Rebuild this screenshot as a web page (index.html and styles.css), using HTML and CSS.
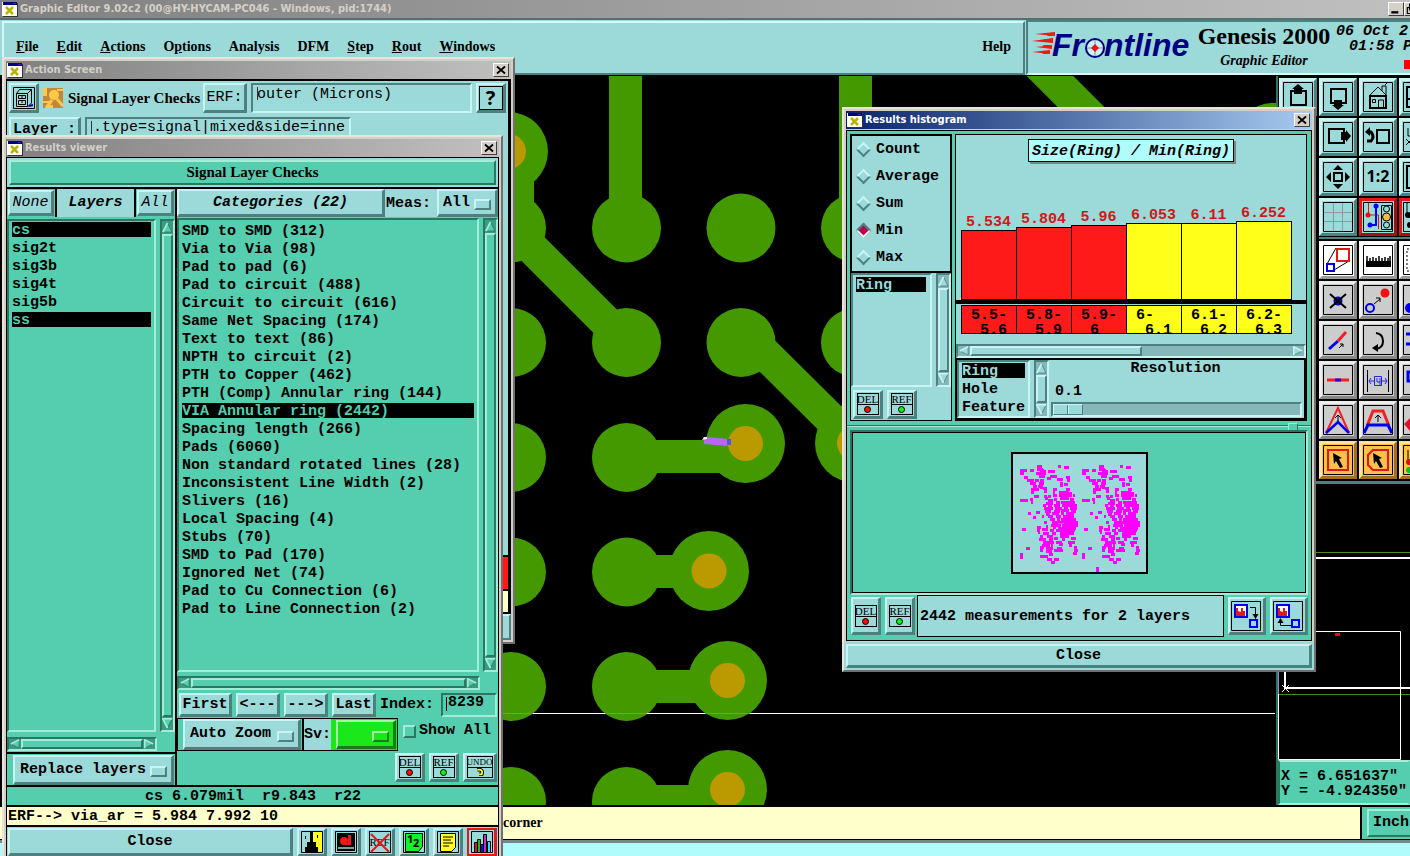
FILE: index.html
```html
<!DOCTYPE html>
<html lang="en">
<head>
<meta charset="utf-8">
<title>Graphic Editor</title>
<link rel="stylesheet" href="styles.css">
</head>
<body>
<svg class="defs" aria-hidden="true">
  <symbol id="app" viewBox="0 0 16 15"><path fill="#333" d="M1 1h15v14H1z"/><path fill="#fff" d="M0 0h15v14H0z"/><path fill="#000080" d="M1 0h14v3H1z"/><path fill="#80a" d="M11 1h3v1h-3z"/><path stroke="#b8b400" stroke-width="2.5" d="M4 5l7 7M11 5l-7 7"/></symbol>
  <symbol id="x" viewBox="0 0 10 10"><path stroke="#000" stroke-width="1.8" d="M1 1.500l8 7M9 1.500l-8 7"/></symbol>
  <symbol id="up" viewBox="0 0 12 12"><path class="tri-d" d="M6 1l5 10H1z"/><path class="tri-l" d="M1 11L6 1"/></symbol>
  <symbol id="down" viewBox="0 0 12 12"><path class="tri-d" d="M1 1h10L6 11z"/><path class="tri-l" d="M6 11L1 1h10"/></symbol>
  <symbol id="left" viewBox="0 0 12 12"><path class="tri-d" d="M1 6l10-5v10z"/><path class="tri-l" d="M11 1L1 6"/></symbol>
  <symbol id="right" viewBox="0 0 12 12"><path class="tri-d" d="M11 6L1 1v10z"/><path class="tri-l" d="M11 6L1 1v10"/></symbol>
</svg>

<main class="editor">
  <header class="title main-title">
    <svg class="app"><use href="#app"/></svg><span>Graphic Editor 9.02c2 (00@HY-HYCAM-PC046 - Windows, pid:1744)</span>
    <div class="caption"><button aria-label="Minimize"><svg viewBox="0 0 12 10"><path d="M2 7h6v2H2z"/></svg></button><button aria-label="Restore"><svg viewBox="0 0 12 10"><path class="ln" d="M4 1h6v5H4zM2 4h5v5H2z"/></svg></button></div>
  </header>

  <div class="top">
    <nav class="menubar">
      <button><u>F</u>ile</button><button><u>E</u>dit</button><button><u>A</u>ctions</button><button>O<u>p</u>tions</button><button>Analysis</button><button>DFM</button><button><u>S</u>tep</button><button><u>R</u>out</button><button><u>W</u>indows</button><button class="help">Help</button>
    </nav>
    <div class="brand">
      <svg class="logo" viewBox="0 0 162 36" aria-label="Frontline">
        <path fill="#f01818" d="M3 5l20-2v4zM0 12l21-3v5zM4 18l16-2v4zM0 23l18-2v4z"/><path fill="#f01818" d="M12 4h10l-1 3h-5zM12 10h8l-1 3h-5zM11 16h7l-1 3h-5zM9 22h8l-1 3h-5z"/>
        <g class="logo-text"><text x="20" y="27">Fr</text><text x="72" y="27">ntline</text></g>
        <circle cx="63" cy="19" r="9" fill="#c8f4f4" stroke="#000080" stroke-width="2"/><path stroke="#88a" d="M63 11v16M55 19h16"/><path fill="#f01010" d="M63 15l4 4-4 4-4-4z"/>
      </svg>
      <div class="product"><b>Genesis 2000</b><i>Graphic Editor</i></div>
      <div class="clock"><span>06 Oct 2</span><span>01:58 P</span><em></em></div>
    </div>
  </div>

  <div class="work">
    <svg class="board" aria-label="PCB artwork"><g transform="translate(0 -76)">
      <g stroke="#449900" stroke-width="33" fill="none" stroke-linecap="round">
        <path d="M625.500 60v168M855.500 60v168M517.500 152v76M512 228l114 114M751 340l104 103M1029 55l90 90M626 456.500h119M626 571.500h83M626 686.500h101M626 801.500h101"/>
      </g>
      <g fill="#449900">
        <circle cx="511.500" cy="228" r="34.500"/><circle cx="626.500" cy="228" r="34.500"/><circle cx="741" cy="228" r="34.500"/><circle cx="855.500" cy="228" r="34.500"/>
        <circle cx="511.500" cy="342.500" r="34.500"/><circle cx="626.500" cy="342.500" r="34.500"/><circle cx="741" cy="342.500" r="34.500"/><circle cx="855.500" cy="342.500" r="34.500"/>
        <circle cx="511.500" cy="457.500" r="34.500"/><circle cx="626.500" cy="457.500" r="34.500"/>
        <circle cx="511.500" cy="572" r="34.500"/><circle cx="626.500" cy="572" r="34.500"/>
        <circle cx="511.500" cy="686.500" r="34.500"/><circle cx="626.500" cy="686.500" r="34.500"/>
        <circle cx="511.500" cy="801.500" r="34.500"/><circle cx="626.500" cy="801.500" r="34.500"/>
        <circle cx="508.500" cy="151.500" r="39.500"/><circle cx="745.500" cy="443.500" r="39.500"/><circle cx="854.500" cy="443" r="39.500"/><circle cx="709" cy="571" r="40"/><circle cx="727.500" cy="680.500" r="39.500"/><circle cx="727.500" cy="789.500" r="39.500"/><circle cx="1273" cy="142" r="39"/>
      </g>
      <g fill="#bb9900"><circle cx="508.500" cy="151.500" r="17.500"/><circle cx="745.500" cy="443.500" r="17.500"/><circle cx="854.500" cy="443" r="17.500"/><circle cx="709" cy="571" r="17.500"/><circle cx="727.500" cy="680.500" r="17.500"/><circle cx="727.500" cy="789.500" r="17.500"/></g>
      <path stroke="#fff" d="M503 713.500h772"/><path stroke="#888" d="M503 713.500h30M605 713.500h42M705 713.500h45"/>
      <path stroke="#b864ff" stroke-width="7" d="M704 440.500l25 2"/><path fill="#5058d8" d="M727 439h4v6h-4z"/><path fill="#fff" d="M702 440l2-3h3v2z"/>
    </g></svg>

    <aside class="side">
      <div class="tools">
        <div class="tool-col"><button class="tool" aria-label="Pan up"><svg viewBox="0 0 32 32"><path class="ln" d="M1.500 1.500h29v29h-29z"/><path class="l2" d="M12 10H9v14h15V10h-4"/><path d="M16 3l6 5h-2v5h-8V8h-2z"/></svg></button></div>
        <div class="tool-groups">
          <div class="grid3">
            <button class="tool" aria-label="Pan down"><svg viewBox="0 0 32 32"><path class="ln" d="M1.500 1.500h29v29h-29z"/><path class="l2" d="M12 22H9V8h15v14h-4"/><path d="M16 29l6-5h-2v-5h-8v5h-2z"/></svg></button>
            <button class="tool" aria-label="Home"><svg viewBox="0 0 32 32"><path class="ln" d="M1.500 1.500h29v29h-29zM7 15L16 6l9 9M20 10V5h4v9M23 4l2-2"/><path class="l2" d="M8 15h16v12H8z"/><path class="ln" d="M16.500 27v-8h5v8M10.500 18.500h3v3h-3z"/></svg></button>
            <button class="tool" aria-label="Zoom in"><svg viewBox="0 0 32 32"><path class="ln" d="M1.500 1.500h29v29h-29z"/><path class="l2" d="M5 6h22v20H5zM5 18h12"/></svg></button>
            <button class="tool" aria-label="Pan right"><svg viewBox="0 0 32 32"><path class="ln" d="M1.500 1.500h29v29h-29z"/><path class="l2" d="M22 12V8H7v14h15v-4"/><path d="M29 15l-5-6v2h-5v8h5v2z"/></svg></button>
            <button class="tool" aria-label="Previous view"><svg viewBox="0 0 32 32"><path class="ln" d="M1.500 1.500h29v29h-29z"/><path class="l2" d="M15 9h12v13H15z"/><path fill="none" stroke="#000" stroke-width="3" d="M6 11h3q4 5 0 9H5"/><path d="M3 11l5-5v9z"/></svg></button>
            <button class="tool" aria-label="Reset view"><svg viewBox="0 0 32 32"><path class="ln" d="M1.500 1.500h29v29h-29zM6 7v8h6M4 18l6 6M4 24l6-6"/></svg></button>
            <button class="tool" aria-label="Fit"><svg viewBox="0 0 32 32"><path class="ln" d="M1.500 1.500h29v29h-29z"/><path class="l2" d="M12 12h8v8h-8z"/><path d="M16 4l5 5H11zM16 28l5-5H11zM4 16l5-5v10zM28 16l-5-5v10z"/></svg></button>
            <button class="tool" aria-label="Scale 1:2"><svg viewBox="0 0 32 32"><path class="ln" d="M1.500 1.500h29v29h-29z"/><text class="scale" x="16" y="21">1:2</text></svg></button>
            <button class="tool" aria-label="Window"><svg viewBox="0 0 32 32"><path class="ln" d="M1.500 1.500h29v29h-29z"/><path class="l2" d="M5 5h22v22H5z"/></svg></button>
            <button class="tool" aria-label="Grid"><svg viewBox="0 0 32 32"><path class="ln" d="M1.500 1.500h29v29h-29z"/><path fill="none" stroke="#8a9aa0" d="M11.500 2v28M20.500 2v28M2 11.500h28M2 20.500h28"/></svg></button>
            <button class="tool hot" aria-label="Display control"><svg viewBox="0 0 32 32"><path class="ln" d="M1.500 1.500h29v29h-29zM19.500 4.500h10v24h-10z"/><path fill="none" stroke="#e01010" d="M6.500 2v12h10v14"/><path fill="none" stroke="#00e" stroke-width="2" d="M14 5v19H8"/><circle cx="6" cy="14" r="2.500" fill="#e01010"/><circle cx="14" cy="5" r="2.500" fill="#00e"/><circle cx="8" cy="24" r="2.500" fill="#00e"/><circle class="ln" cx="24.500" cy="8" r="3"/><circle cx="24.500" cy="16" r="4" fill="#fb4" stroke="#000"/><circle class="ln" cx="24.500" cy="24" r="3"/></svg></button>
            <button class="tool hot" aria-label="Nets"><svg viewBox="0 0 32 32"><path class="ln" d="M1.500 1.500h29v29h-29zM5 2v12M5 14h8v10H6"/><circle cx="6" cy="14" r="3"/><circle cx="8" cy="24" r="3"/></svg></button>
          </div>
          <div class="grid3 edit-tools">
            <button class="tool white" aria-label="Zoom window"><svg viewBox="0 0 32 32"><path class="ln" d="M1.500 1.500h29v29h-29zM5 20L14 4M12 26l15-9"/><path fill="none" stroke="#e01818" stroke-width="2" d="M15 5h12v12H15z"/><path fill="#fff" stroke="#00e" stroke-width="2" d="M5 20h7v7H5z"/></svg></button>
            <button class="tool white" aria-label="Measure"><svg viewBox="0 0 32 32"><path class="ln" d="M1.500 1.500h29v29h-29z"/><path d="M4 17h25v6H4z"/><path stroke="#000" stroke-width="1.500" d="M5 17v-5M8 17v-3M11 17v-4M14 17v-3M17 17v-5M20 17v-3M23 17v-4M26 17v-3M28 17v-5"/></svg></button>
            <button class="tool white" aria-label="Select area"><svg viewBox="0 0 32 32"><path class="ln" d="M1.500 1.500h29v29h-29z"/><path class="ln" stroke-dasharray="2" d="M5 5h22v22H5z"/></svg></button>
            <button class="tool grey" aria-label="Delete"><svg viewBox="0 0 32 32"><path class="ln" d="M1.500 1.500h29v29h-29z"/><circle cx="16" cy="17" r="4.500" fill="#00b"/><path class="l2" d="M8 10l16 14M24 10L8 24"/></svg></button>
            <button class="tool grey" aria-label="Move"><svg viewBox="0 0 32 32"><path class="ln" d="M1.500 1.500h29v29h-29z"/><circle cx="23" cy="9" r="4.500" fill="#f01010"/><circle cx="8" cy="24" r="4" fill="none" stroke="#00e" stroke-width="2"/><path class="ln" d="M12 20l6-5M18 18v-4h-4"/></svg></button>
            <button class="tool grey" aria-label="Copy"><svg viewBox="0 0 32 32"><path class="ln" d="M1.500 1.500h29v29h-29z"/><circle cx="8" cy="24" r="5" fill="#00e"/></svg></button>
            <button class="tool grey" aria-label="Stretch"><svg viewBox="0 0 32 32"><path class="ln" d="M1.500 1.500h29v29h-29z"/><path stroke="#00e" stroke-width="3" d="M7 25l9-8"/><path stroke="#f02020" stroke-width="3" d="M16 17l8-9"/><path class="ln" d="M17 24l4-4M21 23v-3h-3"/></svg></button>
            <button class="tool grey" aria-label="Rotate"><svg viewBox="0 0 32 32"><path class="ln" d="M1.500 1.500h29v29h-29z"/><path class="l2" d="M14 9q7 1 7 8t-7 8"/><path d="M10 24l6-4v8z"/></svg></button>
            <button class="tool grey" aria-label="Align"><svg viewBox="0 0 32 32"><path class="ln" d="M1.500 1.500h29v29h-29z"/><path stroke="#00e" stroke-width="3" d="M4 10h14M4 20h14"/></svg></button>
            <button class="tool grey" aria-label="Split line"><svg viewBox="0 0 32 32"><path class="ln" d="M1.500 1.500h29v29h-29z"/><path stroke="#f02020" stroke-width="3" d="M5 16h22"/><path stroke="#30c" stroke-width="3" d="M13 16h6"/></svg></button>
            <button class="tool grey" aria-label="Spacing"><svg viewBox="0 0 32 32"><path class="ln" d="M1.500 1.500h29v29h-29zM5.500 6v22M26.500 6v22"/><path fill="none" stroke="#22e" d="M7 17h5M20 17h5M9 14l-2 3 2 3M23 14l2 3-2 3M12.500 12.500h7v9h-7zM15 14v4h3v-4M18 18v3"/></svg></button>
            <button class="tool grey" aria-label="Resize"><svg viewBox="0 0 32 32"><path class="ln" d="M1.500 1.500h29v29h-29z"/><path fill="none" stroke="#00e" stroke-width="3" d="M6 8h16v9H6zM10 17v7"/></svg></button>
            <button class="tool grey" aria-label="Move corner"><svg viewBox="0 0 32 32"><path class="ln" d="M1.500 1.500h29v29h-29z"/><path fill="none" stroke="#f02020" stroke-width="2" d="M4 29l12-25 11 25"/><path fill="none" stroke="#00e" stroke-width="2.500" d="M4 29l12-11 11 11"/><path class="ln" d="M16 17v-5M13 14l3-3 3 3"/></svg></button>
            <button class="tool grey" aria-label="Move edge"><svg viewBox="0 0 32 32"><path class="ln" d="M1.500 1.500h29v29h-29z"/><path fill="none" stroke="#f02020" stroke-width="3" d="M5 22l6-15h10l6 15"/><path fill="none" stroke="#00e" stroke-width="3" d="M2 29l4-8h20l4 8"/><path class="ln" d="M16 18v-6M13 14l3-3 3 3"/></svg></button>
            <button class="tool grey" aria-label="Add"><svg viewBox="0 0 32 32"><path class="ln" d="M1.500 1.500h29v29h-29z"/><path fill="#e01030" d="M2 20l6-6v5h5v3H8v5z"/></svg></button>
            <button class="tool gold" aria-label="Select"><svg viewBox="0 0 32 32"><path class="ln" d="M1.500 1.500h29v29h-29z"/><path fill="none" stroke="#e01818" stroke-width="2" d="M6 6h20v20H6z"/><path d="M11 9l9 5-3 1 4 8-3 1-4-7-2 3z"/></svg></button>
            <button class="tool gold" aria-label="Select polygon"><svg viewBox="0 0 32 32"><path class="ln" d="M1.500 1.500h29v29h-29z"/><path fill="none" stroke="#e01818" stroke-width="2" d="M11 6h15v20H11l-5-5V11z"/><path d="M11 9l9 5-3 1 4 8-3 1-4-7-2 3z"/></svg></button>
            <button class="tool gold" aria-label="Select net"><svg viewBox="0 0 32 32"><path class="ln" d="M1.500 1.500h29v29h-29zM6 6v14"/><circle cx="7" cy="18" r="3" fill="#e01010"/><circle cx="7" cy="26" r="3" fill="#10c020"/></svg></button>
          </div>
        </div>
      </div>
      <svg class="overview" aria-label="Overview">
        <g transform="translate(-1278 -484)" fill="none"><path stroke="#4a8a20" d="M1278 552.500h140M1278 694.500h140"/><path stroke="#fff" stroke-width="2" d="M1420 558h-135v130h135"/><path stroke="#fff" d="M1278.500 631.500h122v128h-122zM1282 685l7 7M1289 685l-7 7"/><path stroke="#a080e0" d="M1278.500 640v54"/><path fill="#e01010" d="M1335 633h5v3h-5z"/></g>
      </svg>
      <div class="coords"><div>X = 6.651637"</div><div>Y = -4.924350"</div></div>
    </aside>
  </div>

  <div class="status"><div class="message">corner</div><div class="units"><button>Inch</button></div></div>
  <div class="footer"></div>
</main>

<section class="win action" aria-label="Action Screen">
  <header class="title"><svg class="app"><use href="#app"/></svg><span>Action Screen</span><button class="close" aria-label="Close window"><svg><use href="#x"/></svg></button></header>
  <div class="action-body">
    <div class="action-top">
      <button class="bev sq" aria-label="Open checklist"><svg viewBox="0 0 24 24"><path class="ln" d="M1.500 1.500h21v21h-21zM4.500 7.500h11v13h-11zM4.500 7.500l3-4h12l-4 4M19.500 4v13l-4 4M6.500 9.500h7v3h-7zM6.500 14.500h7v4h-7zM9 11h2M9 16h2"/><path stroke="#00c" stroke-width="2" d="M17 20l4-1"/></svg></button>
      <svg class="badge" viewBox="0 0 20 20"><path fill="#c08838" d="M0 0h20v20H0z"/><path fill="#ffc848" d="M0 0h4v8H0zM0 13h8v2H0zM4 17h6v3H4zM14 1h6v2h-6z"/><circle cx="11" cy="7" r="5" fill="#ffc848"/><path stroke="#ffc848" stroke-width="3" d="M14 11l6 7M3 20l6-8"/></svg>
      <strong>Signal Layer Checks</strong>
      <button class="bev erf" id="erf">ERF:</button>
      <input class="field erf-field" aria-labelledby="erf" value="outer (Microns)">
      <button class="bev sq ask" aria-label="Help"><span>?</span></button>
    </div>
    <div class="action-row"><button class="bev layer" id="lay">Layer :</button><input class="field layer-field" aria-labelledby="lay" value=".type=signal|mixed&amp;side=inne"></div>
  </div>
  <div class="action-red"></div><div class="action-cream"></div>
  <div class="action-foot"></div>
</section>

<section class="win viewer" aria-label="Results viewer">
  <header class="title"><svg class="app"><use href="#app"/></svg><span>Results viewer</span><button class="close" aria-label="Close window"><svg><use href="#x"/></svg></button></header>
  <div class="viewer-body">
    <div class="checks"><div class="checks-label">Signal Layer Checks</div></div>
    <div class="cols">
      <div class="col green">
        <div class="layer-head"><div><button class="bev it">None</button></div><div class="lh-title">Layers</div><div><button class="bev it">All</button></div></div>
        <div class="list-wrap">
          <ul class="list layers"><li class="sel">cs</li><li>sig2t</li><li>sig3b</li><li>sig4t</li><li>sig5b</li><li class="sel">ss</li></ul>
          <div class="sb v"><svg><use href="#up"/></svg><i></i><svg><use href="#down"/></svg></div>
        </div>
        <div class="sb h short"><svg><use href="#left"/></svg><i></i><svg><use href="#right"/></svg></div>
        <div class="replace"><span class="drop"><select class="bev" aria-label="Layer mode"><option>Replace layers</option></select></span></div>
      </div>
      <div class="col green">
        <div class="cat-head"><button class="bev cat">Categories (22)</button><label for="meas">Meas:</label><span class="drop meas"><select class="bev" id="meas"><option>All</option></select></span></div>
        <div class="list-wrap cats">
          <ul class="list"><li>SMD to SMD (312)</li><li>Via to Via (98)</li><li>Pad to pad (6)</li><li>Pad to circuit (488)</li><li>Circuit to circuit (616)</li><li>Same Net Spacing (174)</li><li>Text to text (86)</li><li>NPTH to circuit (2)</li><li>PTH to Copper (462)</li><li>PTH (Comp) Annular ring (144)</li><li class="sel">VIA Annular ring (2442)</li><li>Spacing length (266)</li><li>Pads (6060)</li><li>Non standard rotated lines (28)</li><li>Inconsistent Line Width (2)</li><li>Slivers (16)</li><li>Local Spacing (4)</li><li>Stubs (70)</li><li>SMD to Pad (170)</li><li>Ignored Net (74)</li><li>Pad to Cu Connection (6)</li><li>Pad to Line Connection (2)</li></ul>
          <div class="sb v"><svg><use href="#up"/></svg><i></i><svg><use href="#down"/></svg></div>
        </div>
        <div class="sb h short2"><svg><use href="#left"/></svg><i></i><svg><use href="#right"/></svg></div>
        <div class="nav-row"><button class="bev">First</button><button class="bev">&lt;---</button><button class="bev">---&gt;</button><button class="bev">Last</button><label for="idx">Index:</label><input class="field" id="idx" value="8239"></div>
        <div class="zoom-row">
          <div class="zoom-box"><div class="az"><span class="drop"><select class="bev" aria-label="Zoom mode"><option>Auto Zoom</option></select></span></div><div class="sv"><label for="sv">Sv:</label><span class="drop lime"><select class="bev" id="sv"><option></option></select></span></div></div>
          <label class="show"><input type="checkbox">Show All</label>
        </div>
        <div class="tool-row"><button class="bev ic"><span class="chip"><span>DEL</span><em class="dot red"></em></span></button><button class="bev ic"><span class="chip"><span>REF</span><em class="dot lit"></em></span></button><button class="bev ic wide"><span class="chip undo"><span>UNDO</span><svg viewBox="0 0 12 10"><path fill="none" stroke="#000" stroke-width="4" d="M3 2q7-1 5 5h-3"/><path fill="none" stroke="#ff3" stroke-width="2" d="M3 2q7-1 5 5h-3"/></svg></span></button></div>
      </div>
    </div>
    <div class="readout">cs 6.079mil&nbsp; r9.843&nbsp; r22</div>
    <div class="erf-line">ERF--&gt; via_ar = 5.984 7.992 10</div>
    <div class="bottom">
      <button class="bev wide-close">Close</button>
      <button class="bev ic" aria-label="Layers view"><svg viewBox="0 0 24 24"><path fill="#ff2" d="M12 2h10v20H12z"/><path d="M10 2h3v10h3v5h2v5H5v-5h2v-5h3z"/><path fill="#000" d="M5 6h1v3H5zM17 5h1v3h-1z"/><path class="ln" d="M1.500 1.500h21v21h-21z"/></svg></button>
      <button class="bev ic" aria-label="Snapshot"><svg viewBox="0 0 24 24"><path fill="none" stroke="#000" d="M1.500 1.500h21v21h-21z"/><path d="M3 3h18v18H3z"/><circle cx="10" cy="11" r="4" fill="#f01818"/><path fill="#f01818" d="M14 5h3v10h-6v-2h3z"/><path stroke="#9cdada" stroke-width="1.500" d="M4 18h16"/></svg></button>
      <button class="bev ic struck"><span class="chip plain"><span>REF</span></span><svg viewBox="0 0 24 24"><path stroke="#e01818" stroke-width="2" d="M3 4l18 18M21 4L3 22"/></svg></button>
      <button class="bev ic" aria-label="Number list"><svg viewBox="0 0 24 24"><path class="ln" d="M1.500 1.500h21v21h-21z"/><path fill="#18f028" stroke="#000" d="M3.500 3.500h17v13l-4 5h-13z"/><text class="num" x="5" y="13">1</text><text class="num" x="11" y="17">2</text></svg></button>
      <button class="bev ic" aria-label="Report"><svg viewBox="0 0 24 24"><path class="ln" d="M1.500 1.500h21v21h-21z"/><path fill="#ff2" stroke="#000" d="M4.500 3.500h15v14l-4 4h-11z"/><path class="ln" d="M7 7h10M7 10h8M7 13h10M7 16h6"/></svg></button>
      <button class="bev ic hot" aria-label="Histogram"><svg viewBox="0 0 24 24"><path class="ln" d="M1.500 1.500h21v21h-21z"/><path fill="#f01010" stroke="#000" d="M4.500 12.500h3v10h-3z"/><path fill="#10c020" stroke="#000" d="M7.500 9.500h3v13h-3z"/><path fill="#20f" stroke="#000" d="M10.500 14.500h3v8h-3z"/><path fill="#c030d0" stroke="#000" d="M13.500 4.500h3v18h-3z"/><path fill="#3de" stroke="#000" d="M17.500 11.500h3v11h-3z"/></svg></button>
    </div>
  </div>
</section>

<section class="win hist" aria-label="Results histogram">
  <header class="title active"><svg class="app"><use href="#app"/></svg><span>Results histogram</span><button class="close" aria-label="Close window"><svg><use href="#x"/></svg></button></header>
  <div class="hist-body">
    <div class="hist-upper">
      <div class="stat">
        <fieldset><label><input type="radio" name="m">Count</label><label><input type="radio" name="m">Average</label><label><input type="radio" name="m">Sum</label><label><input type="radio" name="m" checked>Min</label><label><input type="radio" name="m">Max</label></fieldset>
        <div class="list-wrap aqua"><ul class="list"><li class="sel">Ring</li></ul><div class="sb v"><svg><use href="#up"/></svg><i></i><svg><use href="#down"/></svg></div></div>
        <div class="pair"><button class="bev ic"><span class="chip"><span>DEL</span><em class="dot red"></em></span></button><button class="bev ic"><span class="chip"><span>REF</span><em class="dot lit"></em></span></button></div>
      </div>
      <div class="chart-col">
        <div class="chart">
          <div class="chart-title">Size(Ring) / Min(Ring)</div>
          <div class="bars">
            <div class="bar r"><span>5.534</span><i style="height:70px"></i></div><div class="bar r"><span>5.804</span><i style="height:73px"></i></div><div class="bar r"><span>5.96</span><i style="height:75px"></i></div><div class="bar"><span>6.053</span><i style="height:77px"></i></div><div class="bar"><span>6.11</span><i style="height:77px"></i></div><div class="bar"><span>6.252</span><i style="height:79px"></i></div>
          </div>
          <div class="ranges"><pre class="r">5.5-
 5.6</pre><pre class="r">5.8-
 5.9</pre><pre class="r">5.9-
 6</pre><pre>6-
 6.1</pre><pre>6.1-
 6.2</pre><pre>6.2-
 6.3</pre></div>
          <div class="sb h aqua part"><svg><use href="#left"/></svg><i></i><svg><use href="#right"/></svg></div>
        </div>
        <div class="lower">
          <div class="list-wrap aqua"><ul class="list"><li class="sel">Ring</li><li>Hole</li><li>Feature</li></ul><div class="sb v"><svg><use href="#up"/></svg><i></i><svg><use href="#down"/></svg></div></div>
          <div class="res"><label for="res">Resolution</label><output for="res">0.1</output><input type="range" id="res" min="0" max="10" value="0"></div>
        </div>
      </div>
    </div>
    <div class="sash"><i></i></div>
    <div class="map-pane"><svg class="map" viewBox="0 0 137 122" aria-label="Measurement map"><path fill="#9cdada" stroke="#000" stroke-width="2" d="M1 1h135v120H1z"/>
      <g id="dots" stroke="#f0f" stroke-width="3" fill="none"><path d="M26 14.500h5M47 14.500h3M53 15.500h5M9 18.500h7M19 18.500h4M26 17.500h6M29 19.500h6M37 19.500h7M9 21.500h4M25 21.500h6M32 21.500h3M13 25.500h4M28 24.500h6M36 26.500h4M39 24.500h7M55 25.500h4M16 28.500h7M24 28.500h4M29 28.500h4M46 27.500h6M56 28.500h3M19 31.500h6M28 31.500h5M49 31.500h3M53 32.500h4M22 34.500h4M27 34.500h5M32 36.500h4M49 33.500h3M20 37.500h8M42 37.500h4M55 37.500h4M20 40.500h3M33 39.500h3M42 40.500h2M48 40.500h7M57 41.500h4M23 44.500h5M33 44.500h3M37 44.500h3M42 43.500h4M48 43.500h13M62 43.500h2M9 48.500h8M19 47.500h3M34 46.500h3M37 48.500h5M43 47.500h3M49 46.500h9M59 47.500h4M20 50.500h2M35 51.500h7M45 50.500h4M50 50.500h14M32 53.500h3M37 54.500h4M43 53.500h6M51 53.500h15M33 56.500h9M44 56.500h7M53 56.500h4M59 56.500h7M34 59.500h6M43 59.500h6M50 58.500h8M60 59.500h5M17 61.500h3M25 60.500h4M35 62.500h4M41 61.500h7M50 61.500h3M55 61.500h8M22 65.500h3M31 64.500h2M37 64.500h5M45 64.500h5M52 64.500h11M39 67.500h5M46 67.500h3M50 67.500h15M33 70.500h3M41 70.500h26M40 73.500h10M51 73.500h16M26 75.500h4M35 74.500h2M42 75.500h3M47 76.500h18M11 77.500h4M26 78.500h3M31 77.500h6M39 78.500h4M45 78.500h7M50 78.500h14M27 80.500h2M32 81.500h6M41 81.500h4M49 81.500h14M29 84.500h3M36 84.500h6M49 84.500h9M28 87.500h7M38 87.500h4M43 86.500h4M51 87.500h3M60 86.500h5M32 90.500h11M45 90.500h6M57 90.500h7M31 93.500h8M40 93.500h2M48 92.500h4M58 93.500h3M15 96.500h4M29 95.500h4M35 96.500h7M46 96.500h5M63 95.500h3M29 98.500h3M35 99.500h6M43 98.500h9M63 98.500h4M38 102.500h4M62 101.500h4M9 102.500h3M29 104.500h8M9 105.500h3M36 107.500h5M43 107.500h5M40 110.500h4M56 39.500h2M56 38v5M10 18v5M31 17v9M30 27v10"/></g>
      <use href="#dots" x="62"/><path stroke="#f0f" stroke-width="3" d="M86.500 115v5"/><path stroke="#888" d="M47 71.500h6"/></svg></div>
    <div class="map-foot"><button class="bev ic"><span class="chip"><span>DEL</span><em class="dot red"></em></span></button><button class="bev ic"><span class="chip"><span>REF</span><em class="dot lit"></em></span></button><div class="count">2442 measurements for 2 layers</div>
      <button class="bev big" aria-label="Next result"><svg viewBox="0 0 32 32"><path class="ln" d="M1.500 1.500h29v29h-29zM20 7.500h5.500v11"/><path d="M22.500 14h6l-3 5z"/><path fill="#fff" stroke="#00e" stroke-width="2" d="M5 5h12v12H5z"/><path fill="#e01818" d="M6 16V8h2v3l3 1V8h2v3h2v5z"/><path fill="none" stroke="#00e" stroke-width="2" d="M20 20h7v7h-7z"/></svg></button>
      <button class="bev big" aria-label="Previous result"><svg viewBox="0 0 32 32"><path class="ln" d="M1.500 1.500h29v29h-29zM19 25.500H8.500V20"/><path d="M5.500 23h6l-3-5z"/><path fill="#fff" stroke="#00e" stroke-width="2" d="M5 5h12v12H5z"/><path fill="#e01818" d="M6 16V8h2v3l3 1V8h2v3h2v5z"/><path fill="none" stroke="#00e" stroke-width="2" d="M20 20h7v7h-7z"/></svg></button></div>
  </div>
  <button class="bev hist-close">Close</button>
</section>
</body>
</html>
```
FILE: styles.css
```css
:root {
  --aqua: #9cdada; --aqua-l: #c8f4f4; --aqua-d: #4f8080; --aqua-t: #84b8b8;
  --teal: #54ceae; --teal-l: #a4ecd8; --teal-d: #2a7862;
  --grey: #d4d0c8; --cream: #ffffcc;
  --mono: "Liberation Mono", monospace; --serif: "Liberation Serif", serif;
  --sans: "Noto Sans", sans-serif;
}
* { box-sizing: border-box; }
body { margin: 0; height: 100vh; overflow: hidden; position: relative; background: #000; color: #000; font: bold 15px/18px var(--mono); }
button, input, select { font: inherit; color: inherit; margin: 0; padding: 0; border-radius: 0; outline: 0; }
button { background: none; border: 0; }
svg { display: block; }
.defs { position: absolute; width: 0; height: 0; }
.ln { fill: none; stroke: #000; }
.l2 { fill: none; stroke: #000; stroke-width: 2; }
.tri-d { fill: var(--sa, #54ceae); stroke: var(--sd, #2a7862); }
.tri-l { fill: none; stroke: var(--sl, #a4ecd8); stroke-width: 2; }
.scale { font: bold 16px var(--sans); text-anchor: middle; }
.num { font: bold 11px var(--sans); }

/* main editor */
.editor { height: 100%; display: flex; flex-direction: column; overflow: hidden; }
.title { display: flex; align-items: center; height: 18px; flex: none; padding: 0 2px 0 1px; gap: 2px; font: bold 11px/18px "DejaVu Sans Condensed", "DejaVu Sans", sans-serif; color: var(--grey); background: linear-gradient(90deg, #808080, #c0c0c0); white-space: nowrap; }
.title.active { background: linear-gradient(90deg, #0a246a, #a6caf0); color: #fff; }
.app { width: 16px; height: 15px; flex: none; }
.close { margin-left: auto; width: 16px; height: 14px; background: var(--grey); border: 1px solid; border-color: #fff #404040 #404040 #fff; display: grid; place-items: center; }
.close svg { width: 10px; height: 10px; }
.main-title { padding: 0 0 0 2px; }
.caption { margin-left: auto; display: flex; width: 22px; overflow: hidden; }
.caption button { flex: none; width: 16px; height: 14px; background: var(--grey); border: 1px solid; border-color: #fff #404040 #404040 #fff; }
.top { display: flex; height: 57px; flex: none; background: var(--aqua); border-top: 2px solid #667; }
.menubar { flex: 1; display: flex; align-items: center; gap: 18px; margin: 1px 0 0 2px; padding: 0 12px 2px; border: 2px solid; border-color: #d8f8f8 var(--aqua-d) var(--aqua-d) #d8f8f8; font: bold 14px/18px var(--serif); }
.help { margin-left: auto; }
.brand { width: 384px; display: flex; overflow: hidden; margin-left: 1px; border: 2px solid; border-color: var(--aqua-d) transparent #d8f8f8 var(--aqua-d); border-right: 0; white-space: nowrap; }
.logo { width: 162px; height: 36px; flex: none; margin: 7px 0 0 4px; }
.logo-text text { font: italic bold 32px "Liberation Sans", sans-serif; fill: #000080; }
.product { display: flex; flex-direction: column; align-items: center; width: 140px; font: bold 14px/18px var(--serif); flex: none; }
.product b { font-size: 24px; line-height: 28px; }
.product i { padding-top: 2px; }
.clock { font: italic bold 15px/15px var(--mono); display: flex; flex-direction: column; padding: 2px 0 0 2px; }
.clock span + span { padding-left: 13px; }
.clock em { background: #f00; width: 8px; height: 9px; margin: 6px 0 0 68px; }
.work { flex: 1; display: flex; min-height: 0; border-top: 1px solid #000; }
.board { flex: 1; min-width: 0; height: 100%; background: #000; }
.side { width: 134px; flex: none; display: flex; flex-direction: column; overflow: hidden; border-left: 2px solid var(--teal-d); }
.tools { display: flex; gap: 2px; padding: 2px 0 2px 1px; flex: none; border-bottom: 3px solid var(--aqua-d); }
.tool-groups { flex: none; }
.grid3 { display: grid; grid-template-columns: repeat(3, 38px); gap: 2px; }
.edit-tools { border-top: 2px solid var(--aqua-d); margin-top: 1px; padding-top: 2px; }
.tool { width: 38px; height: 38px; background: var(--aqua); border: 3px solid; border-color: var(--aqua-l) var(--aqua-d) var(--aqua-d) var(--aqua-l); }
.tool.white { background: #fff; border-color: #fff #999 #999 #fff; }
.tool.grey { background: #ccc; border-color: #eee #888 #888 #eee; }
.tool.gold { background: #ffc04c; border-color: #ffe0a0 #a07020 #a07020 #ffe0a0; }
.tool.hot { border-color: #e01818 #a01010 #a01010 #e01818; }
.overview { flex: 1; width: 100%; min-height: 0; background: #000; }
.coords { flex: none; background: var(--teal); border: 2px solid; border-color: var(--teal-l) transparent var(--teal-l) var(--teal-d); padding: 7px 1px 4px; line-height: 15px; white-space: nowrap; }
.status { flex: none; display: flex; height: 35px; border: solid #000; border-width: 2px 0 1px; }
.message { flex: 1; background: var(--cream); padding-left: 503px; font: bold 14px/32px var(--serif); border-right: 2px solid #000; }
.units { width: 48px; overflow: hidden; background: var(--teal); padding: 2px 0 2px 5px; }
.units button { width: 60px; height: 28px; border: 2px solid; border-color: var(--teal-l) var(--teal-d) var(--teal-d) var(--teal-l); text-align: left; padding-left: 4px; }
.footer { flex: none; height: 16px; background: #b0fcfc; border-top: 3px solid #788; }

/* shared pieces */
.win { position: absolute; padding: 2px; background: var(--grey); border: 2px solid; border-color: #e8e4dc #707070 #707070 #e8e4dc; display: flex; flex-direction: column; }
.bev { background: var(--aqua); border: 3px solid; border-color: var(--aqua-l) var(--aqua-d) var(--aqua-d) var(--aqua-l); border-width: 2px 3px 3px 2px; }
.ic { width: 30px; height: 29px; flex: none; display: grid; place-items: center; }
.ic svg { width: 24px; height: 24px; }
.ic.wide { width: 34px; }
.chip { display: flex; flex-direction: column; align-items: center; width: 22px; height: 22px; border: 1px solid #000; font: 11px/10px var(--serif); white-space: nowrap; }
.chip span { align-self: stretch; height: 11px; border-bottom: 1px solid #000; display: flex; justify-content: center; }
.chip.undo { width: 26px; font-size: 9px; }
.chip.undo svg { width: 12px; height: 10px; }
.chip.plain span { height: 16px; border: 0; line-height: 20px; }
.dot { width: 7px; height: 7px; margin-top: 1px; border: 1px solid #000; border-radius: 50%; }
.dot.red { background: #f01010; }
.dot.lit { background: #10f020; }
.struck > * { grid-area: 1 / 1; }
.field { background: var(--aqua); border: 2px solid; border-color: var(--aqua-d) var(--aqua-l) var(--aqua-l) var(--aqua-d); font-weight: normal; min-width: 0; }
.green { background: var(--teal); }
.aqua { --sl: #c8f4f4; --sd: #4f8080; --sa: #9cdada; --st: #84b8b8; background: var(--aqua); }
.list-wrap { flex: 1; display: flex; justify-content: space-between; min-height: 0; }
.list { list-style: none; margin: 0; padding: 3px 3px 0; flex: 1; margin-right: 4px; border: 2px solid; border-color: var(--sd, #2a7862) var(--sl, #a4ecd8) var(--sl, #a4ecd8) var(--sd, #2a7862); }
.list li { line-height: 17px; margin-bottom: 3px; height: 15px; white-space: nowrap; }
.list .sel { background: #000; color: var(--sa, #54ceae); }
.sb { display: flex; border: 2px solid; border-color: var(--sd, #2a7862) var(--sl, #a4ecd8) var(--sl, #a4ecd8) var(--sd, #2a7862); background: var(--st, #3c9a80); flex: none; }
.sb svg { width: 12px; height: 13px; flex: none; }
.sb.v { flex-direction: column; width: 15px; }
.sb.v svg { width: 11px; }
.sb.h { height: 14px; }
.sb.h svg { height: 10px; }
.sb i { flex: 1; background: var(--sa, #54ceae); border: 2px solid; border-color: var(--sl, #a4ecd8) var(--sd, #2a7862) var(--sd, #2a7862) var(--sl, #a4ecd8); }
.drop { position: relative; display: inline-flex; }
.drop select { appearance: none; width: 100%; padding-left: 5px; }
.drop::after { content: ""; position: absolute; right: 7px; top: 50%; margin-top: -4px; width: 13px; height: 7px; border: 2px solid; border-color: var(--aqua-l) var(--aqua-d) var(--aqua-d) var(--aqua-l); pointer-events: none; }

/* action screen */
.action { left: 2px; top: 57px; width: 513px; height: 587px; }
.action-body { flex: 1; background: var(--aqua); border: solid #000; border-width: 2px 3px 2px 1px; padding: 2px; }
.action-top { display: flex; align-items: flex-start; height: 34px; }
.action-top strong { font: bold 15px/30px var(--serif); width: 140px; flex: none; padding-left: 5px; white-space: nowrap; }
.sq { width: 30px; height: 30px; flex: none; display: grid; place-items: center; }
.sq svg { width: 24px; height: 24px; }
.badge { width: 20px; height: 20px; margin: 5px 0 0 4px; flex: none; }
.erf { width: 44px; height: 30px; font-weight: normal; flex: none; }
.erf-field { flex: 1; height: 30px; margin: 0 4px; padding: 0 4px 8px; background: linear-gradient(#334, #334) 4px 2px / 1px 13px no-repeat var(--aqua); }
.ask span { width: 24px; height: 24px; border: 1px solid #000; font: bold 20px/22px var(--sans); }
.action-row { display: flex; gap: 4px; }
.layer { width: 72px; height: 26px; }
.layer-field { width: 266px; height: 26px; padding: 0 4px 6px 6px; background: linear-gradient(#334, #334) 4px 2px / 1px 13px no-repeat var(--aqua); }
.action-red { height: 34px; background: #ff1a1a; border: solid #000; border-width: 0 3px 2px 1px; }
.action-cream { height: 23px; background: var(--cream); border: solid #000; border-width: 0 3px 2px 1px; }
.action-foot { height: 26px; background: var(--aqua); border: 2px solid; border-color: var(--aqua-l) var(--aqua-d) var(--aqua-d) var(--aqua-l); }

/* results viewer */
.viewer { left: 2px; top: 135px; bottom: -6px; width: 501px; }
.viewer-body { flex: 1; min-height: 0; display: flex; flex-direction: column; gap: 2px; background: #000; border: 1px solid #000; }
.checks { background: var(--aqua); padding: 2px; }
.checks-label { background: var(--teal); border: 2px solid; border-color: var(--teal-l) var(--teal-d) var(--teal-d) var(--teal-l); font: bold 15px/21px var(--serif); text-align: center; }
.cols { flex: 1; min-height: 0; display: grid; grid-template-columns: 168px 1fr; gap: 2px; }
.col { display: flex; flex-direction: column; min-height: 0; min-width: 0; }
.layer-head { display: flex; gap: 2px; background: #000; height: 28px; margin-bottom: 2px; }
.layer-head div { background: var(--teal); padding: 1px; }
.layer-head .lh-title { flex: 1; background: var(--aqua); font-style: italic; text-align: center; line-height: 26px; }
.it { font-style: italic; font-weight: normal; height: 26px; width: 46px; }
.layer-head div:last-child .it { width: 37px; }
.layers { padding-top: 1px; }
.short { margin: 5px 18px 1px 0; }
.replace { border-top: 2px solid #000; padding: 1px 1px 1px 6px; height: 33px; }
.replace .drop { width: 161px; height: 30px; }
.cat-head { display: flex; background: var(--aqua); height: 28px; margin-bottom: 1px; }
.cat { width: 208px; font-style: italic; font-weight: bold; }
.cat-head label { padding: 6px 6px 0 1px; }
.meas { flex: 1; }
.meas select { padding-left: 4px; }
.short2 { margin: 4px 18px 3px 0; }
.nav-row { display: flex; gap: 4px; height: 24px; padding: 0 1px 0 2px; }
.nav-row .bev { width: 44px; white-space: nowrap; }
.nav-row .bev:first-child { width: 53px; }
.nav-row label { padding: 3px 3px 0 0; }
.nav-row .field { flex: 1; padding: 0 3px 4px 5px; font-weight: bold; background: linear-gradient(#000, #000) 3px 2px / 1px 14px no-repeat var(--teal); border-color: var(--teal-d) var(--teal-l) var(--teal-l) var(--teal-d); }
.zoom-row { display: flex; height: 33px; margin-top: 1px; }
.zoom-box { display: flex; gap: 2px; background: #000; border: 1px solid #000; }
.az { background: var(--teal); padding: 0 1px 0 5px; }
.az .drop { width: 118px; height: 31px; }
.sv { display: flex; background: #1ae81a; }
.sv label { background: var(--aqua); line-height: 31px; }
.lime { width: 60px; height: 29px; margin: 1px 1px 0 5px; }
.lime select { background: #1ae81a; border-color: #a0ffa0 #148014 #148014 #a0ffa0; }
.lime::after { border-color: #a0ffa0 #148014 #148014 #a0ffa0; }
.show { display: flex; gap: 3px; padding: 4px 0 0 5px; white-space: nowrap; }
.show input { appearance: none; width: 13px; height: 13px; margin-top: 3px; border: 2px solid; border-color: var(--teal-l) var(--teal-d) var(--teal-d) var(--teal-l); }
.tool-row { display: flex; gap: 4px; justify-content: flex-end; padding: 2px 1px 3px; }
.readout, .erf-line { line-height: 16px; padding: 2px 0 0 1px; }
.readout { background: var(--teal); text-align: center; }
.erf-line { background: var(--cream); }
.bottom { background: var(--aqua); display: flex; gap: 4px; padding: 1px; height: 30px; }
.wide-close { flex: 1; }
.ic.hot { border-color: #e01818; }

/* results histogram */
.hist { left: 842px; top: 107px; width: 474px; }
.hist-body { border: 1px solid #000; background: var(--teal); display: flex; flex-direction: column; margin-top: 1px; }
.hist-upper { display: flex; gap: 3px; height: 292px; padding: 3px 4px 2px 3px; }
.stat { width: 102px; background: var(--aqua); border: 1px solid #000; display: flex; flex-direction: column; }
fieldset { margin: 0; padding: 0 0 0 4px; border: 1px solid #000; border-width: 1px 1px 2px; height: 138px; }
fieldset label { display: flex; align-items: center; gap: 5px; height: 27px; }
input[type="radio"] { appearance: none; width: 11px; height: 11px; margin: 0 2px; transform: rotate(45deg); border: 2px solid; border-color: #c8f4f4 #4f8080 #4f8080 #c8f4f4; }
input[type="radio"]:checked { background: #c0004c; border-color: #4f8080 #d8f8f8 #d8f8f8 #4f8080; }
.pair { display: flex; gap: 4px; padding: 3px 2px 1px; }
.stat .list { padding: 2px 4px 0 3px; }
.chart-col { flex: 1; border: 1px solid #000; display: flex; flex-direction: column; background: #000; min-width: 0; }
.chart { flex: 1; background: var(--aqua); display: flex; flex-direction: column; }
.chart-title { align-self: center; margin: 4px 0 0; border: 1px solid #000; background: #b0fcfc; box-shadow: 2px 2px #788; font-style: italic; line-height: 18px; padding: 3px 3px 0; white-space: nowrap; }
.bars { flex: 1; display: grid; grid-template-columns: repeat(6, 55px); padding-left: 5px; align-items: end; border-bottom: 4px solid #000; }
.bar span { display: block; text-align: center; color: #d01818; line-height: 14px; }
.bar i { display: block; background: #ffff1a; border: 1px solid #000; margin-right: -1px; }
.bar.r i, .ranges .r { background: #ff1a1a; }
.ranges { display: grid; grid-template-columns: repeat(6, 55px); padding: 1px 0 10px 5px; }
.ranges pre { margin: 0 -1px 0 0; font: inherit; line-height: 15px; height: 29px; border: 1px solid #000; background: #ffff1a; padding: 2px 0 0 9px; }
.sb.part i { flex: none; width: 172px; }
.sb.part svg:last-child { margin-left: auto; }
.lower { display: flex; height: 62px; background: #000; gap: 1px; padding: 2px 2px 2px 1px; }
.lower .list-wrap { flex: none; width: 91px; }
.lower .list { padding: 1px 3px 0; }
.res { flex: 1; background: var(--aqua); display: flex; flex-direction: column; }
.res label { text-align: center; padding-right: 2px; }
.res output { padding: 5px 6px 1px; }
input[type="range"] { appearance: none; width: auto; height: 15px; margin: 0 2px; background: var(--aqua-t); border: 2px solid; border-color: var(--aqua-d) var(--aqua-l) var(--aqua-l) var(--aqua-d); }
input[type="range"]::-webkit-slider-thumb { appearance: none; width: 30px; height: 11px; background: linear-gradient(90deg, transparent 13px, #4f8080 13px, #4f8080 14px, #c8f4f4 14px, #c8f4f4 15px, transparent 15px) #9cdada; border: 1px solid; border-color: #c8f4f4 #4f8080 #4f8080 #c8f4f4; }
.sash { height: 7px; display: flex; justify-content: flex-end; padding-right: 13px; background: linear-gradient(#54ceae 2px, #2a7862 2px, #2a7862 3px, #a4ecd8 3px, #a4ecd8 4px, #54ceae 4px); }
.sash i { width: 10px; height: 8px; background: var(--teal); border: 1px solid; border-color: var(--teal-l) var(--teal-d) var(--teal-d) var(--teal-l); }
.map-pane { margin: 0 3px; height: 165px; border: 2px solid; border-color: var(--teal-d) var(--teal-l) var(--teal-l) var(--teal-d); outline: 1px solid #000; outline-offset: -3px; display: grid; justify-items: center; padding-top: 20px; }
.map { width: 137px; height: 122px; shape-rendering: crispEdges; }
.map-foot { display: flex; gap: 4px; align-items: center; padding: 0 3px 3px 4px; }
.map-foot .ic { height: 38px; }
.count { flex: 1; height: 42px; background: var(--aqua); border: 1px solid #000; line-height: 42px; padding-left: 2px; margin-left: -2px; }
.big { width: 38px; height: 38px; }
.big svg { width: 32px; height: 32px; }
.hist-close { margin: 3px 0 0; height: 24px; padding-top: 1px; outline: 2px solid var(--aqua); }
```
